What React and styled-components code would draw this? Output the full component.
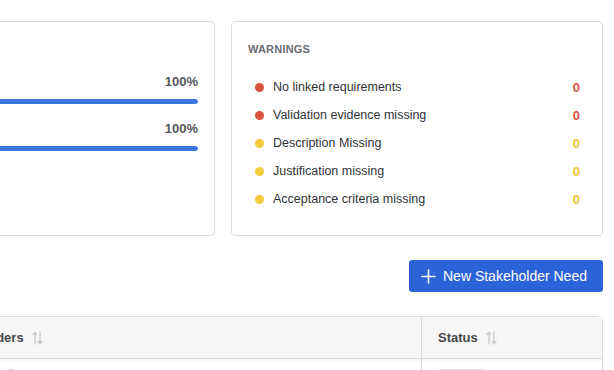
import React from "react";
import styled, { createGlobalStyle } from "styled-components";

const GlobalStyle = createGlobalStyle`
  html, body {
    margin: 0;
    padding: 0;
    background: #ffffff;
    overflow: hidden;
  }
  body {
    font-family: "Liberation Sans", Arial, sans-serif;
    color: #2f3237;
  }
`;

const Page = styled.div`
  width: 833px;
  margin-left: -230px;
  padding-top: 21px;
`;

const TopRow = styled.div`
  display: grid;
  grid-template-columns: 445px 372px;
  gap: 16px;
`;

const Card = styled.div`
  border: 1px solid #dcdcdf;
  border-radius: 4px;
  background: #fff;
  height: 215px;
  box-sizing: border-box;
`;

const CoverageCard = styled(Card)`
  padding: 52px 16px 0 16px;
  display: flex;
  flex-direction: column;
  gap: 17px;
`;

const BarBlock = styled.div`
  display: flex;
  flex-direction: column;
  gap: 10px;
`;

const BarHead = styled.div`
  display: flex;
  justify-content: space-between;
  font-size: 13px;
  font-weight: 700;
  color: #55575c;
  height: 15px;
  line-height: 15px;
`;

const Track = styled.div`
  height: 5px;
  border-radius: 3px;
  background: #e6e9ef;
  overflow: hidden;
`;

const Fill = styled.div`
  height: 100%;
  background: #3e76e0;
  border-radius: 3px;
`;

const WarnCard = styled(Card)`
  padding: 21px 22px 0 16px;
`;

const CardTitle = styled.div`
  font-size: 11px;
  font-weight: 700;
  letter-spacing: 0.2px;
  color: #6a6d74;
  line-height: 13px;
  margin-bottom: 17px;
`;

const WarnList = styled.div`
  display: flex;
  flex-direction: column;
`;

const WarnRow = styled.div`
  display: flex;
  align-items: center;
  height: 28px;
  font-size: 12.5px;
  color: #2f3237;
`;

const Dot = styled.span`
  width: 9px;
  height: 9px;
  border-radius: 50%;
  background: ${(p) => (p.$level === "error" ? "#d9533f" : "#f4cb3e")};
  margin: 0 9px 0 7px;
  flex-shrink: 0;
`;

const WarnLabel = styled.span`
  flex: 1;
`;

const Count = styled.span`
  font-size: 13px;
  font-weight: 700;
  color: ${(p) => (p.$level === "error" ? "#d9533f" : "#f1c232")};
`;

const Actions = styled.div`
  display: flex;
  justify-content: flex-end;
  padding: 24px 0 24px;
  width: 833px;
`;

const PrimaryButton = styled.button`
  display: flex;
  align-items: center;
  gap: 7px;
  height: 32px;
  padding: 0 13px 0 12px;
  border: none;
  border-radius: 3px;
  background: #2c63d9;
  color: #fff;
  font-family: "Liberation Sans", Arial, sans-serif;
  font-size: 14px;
  font-weight: 500;
  cursor: pointer;
  width: 194px;
`;

const Table = styled.div`
  border: 1px solid #dcdcdf;
  border-radius: 6px 6px 0 0;
  width: 833px;
  box-sizing: border-box;
`;

const HeaderRow = styled.div`
  display: grid;
  grid-template-columns: 155px 495px 1fr;
  background: #f7f7f7;
  border-bottom: 1px solid #dcdcdf;
  height: 41px;
  box-shadow: 0 2px 3px rgba(0, 0, 0, 0.04);
`;

const HeadCell = styled.div`
  display: flex;
  align-items: center;
  gap: 8px;
  padding: 0 16px;
  font-size: 13px;
  font-weight: 700;
  color: #45474c;
  border-left: ${(p) => (p.$divider ? "1px solid #dcdcdf" : "none")};
`;

const BodyRow = styled.div`
  display: grid;
  grid-template-columns: 155px 495px 1fr;
  height: 40px;
`;

const BodyCell = styled.div`
  padding: 10px 16px 0;
  border-left: ${(p) => (p.$divider ? "1px solid #dcdcdf" : "none")};
`;

const Avatar = styled.div`
  width: 20px;
  height: 20px;
  border-radius: 50%;
  border: 1px solid #c4c6ca;
  margin-left: 58px;
`;

const Badge = styled.div`
  width: 45px;
  height: 20px;
  border-radius: 3px;
  background: #eeeeef;
  border: 1px solid #dedee0;
`;

const SortIcon = () => (
  <svg width="11" height="14" viewBox="0 0 11 14" fill="none" stroke="#c9cacc" strokeWidth="1.4" strokeLinecap="round">
    <path d="M3 13V1.5" />
    <path d="M1 3.5L3 1.5L5 3.5" />
    <path d="M8 1V12.5" />
    <path d="M6 10.5L8 12.5L10 10.5" />
  </svg>
);

const PlusIcon = () => (
  <svg width="15" height="15" viewBox="0 0 15 15" stroke="#fff" strokeWidth="1.6" strokeLinecap="round">
    <path d="M7.5 1V14" />
    <path d="M1 7.5H14" />
  </svg>
);

const warnings = [
  { label: "No linked requirements", count: 0, level: "error" },
  { label: "Validation evidence missing", count: 0, level: "error" },
  { label: "Description Missing", count: 0, level: "warn" },
  { label: "Justification missing", count: 0, level: "warn" },
  { label: "Acceptance criteria missing", count: 0, level: "warn" },
];

const coverage = [
  { label: "Linked", value: 100 },
  { label: "Validated", value: 100 },
];

export default function App() {
  return (
    <>
      <GlobalStyle />
      <Page>
        <TopRow>
          <CoverageCard>
            {coverage.map((c) => (
              <BarBlock key={c.label}>
                <BarHead>
                  <span>{c.label}</span>
                  <span>{c.value}%</span>
                </BarHead>
                <Track>
                  <Fill style={{ width: `${c.value}%` }} />
                </Track>
              </BarBlock>
            ))}
          </CoverageCard>
          <WarnCard>
            <CardTitle>WARNINGS</CardTitle>
            <WarnList>
              {warnings.map((w) => (
                <WarnRow key={w.label}>
                  <Dot $level={w.level} />
                  <WarnLabel>{w.label}</WarnLabel>
                  <Count $level={w.level}>{w.count}</Count>
                </WarnRow>
              ))}
            </WarnList>
          </WarnCard>
        </TopRow>
        <Actions>
          <PrimaryButton>
            <PlusIcon />
            New Stakeholder Need
          </PrimaryButton>
        </Actions>
        <Table>
          <HeaderRow>
            <HeadCell>ID <SortIcon /></HeadCell>
            <HeadCell>Stakeholders <SortIcon /></HeadCell>
            <HeadCell $divider>Status <SortIcon /></HeadCell>
          </HeaderRow>
          <BodyRow>
            <BodyCell />
            <BodyCell>
              <Avatar />
            </BodyCell>
            <BodyCell $divider>
              <Badge />
            </BodyCell>
          </BodyRow>
        </Table>
      </Page>
    </>
  );
}
